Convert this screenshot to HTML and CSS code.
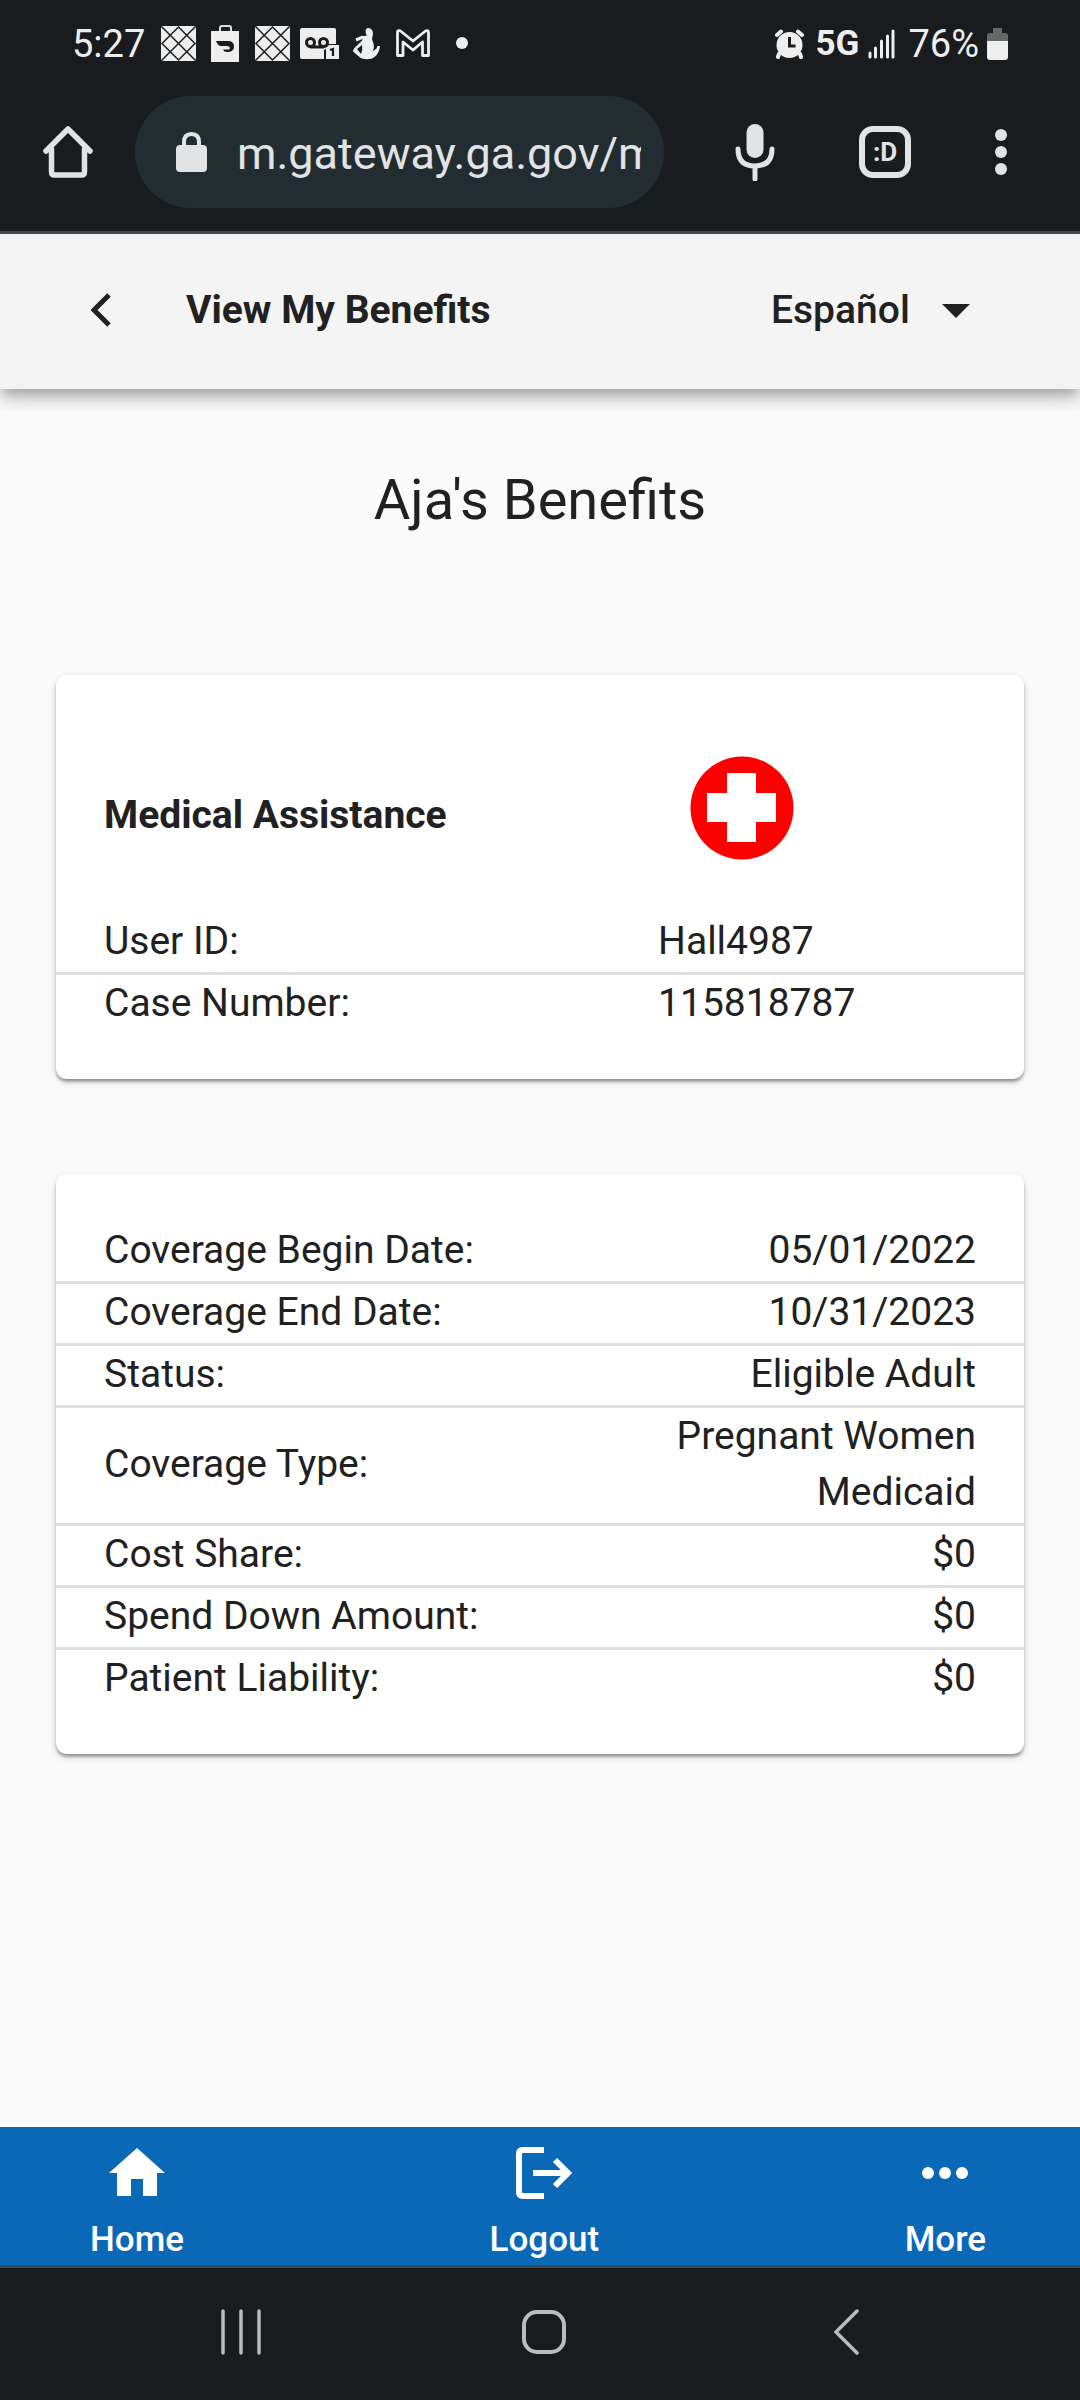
FILE: index.html
```html
<!DOCTYPE html>
<html lang="en">
<head>
<meta charset="utf-8">
<meta name="viewport" content="width=device-width, initial-scale=1">
<title>View My Benefits</title>
<link rel="stylesheet" href="styles.css">
</head>
<body>
<div class="status-bar">
  <div class="status-group">
    <span>5:27</span>
    <svg class="notifications" width="308" height="38" viewBox="161 26 308 38" aria-hidden="true">
      <defs>
        <g id="lattice">
          <rect width="35" height="35" rx="3" fill="#eee"/>
          <path d="M1 1l33 33M34 1L1 34M1 17.500L17.500 1L34 17.500L17.500 34zM1 1" fill="none" stroke="#191c1e" stroke-width="1.500"/>
        </g>
      </defs>
      <use href="#lattice" x="161" y="27"/>
      <path d="M220 33v-4q0-2 2-2h7q2 0 2 2v4" fill="none" stroke="#ddd" stroke-width="2"/>
      <path d="M211 32h28v31h-28z" fill="#eee"/>
      <path d="M216 42h12q6 0 6 5.500t-7 5.500q-3 0-4-2.500h5q2 0 2-1.500t-3-2h-6q-3 0-5-5z" fill="#191c1e"/>
      <use href="#lattice" x="255" y="27"/>
      <rect x="300" y="29" width="36" height="31" rx="2" fill="#eee"/>
      <path d="M310 48h14" stroke="#191c1e" stroke-width="3"/>
      <circle cx="310.500" cy="43.500" r="4" fill="none" stroke="#191c1e" stroke-width="3"/>
      <circle cx="323.500" cy="43.500" r="4" fill="none" stroke="#191c1e" stroke-width="3"/>
      <path d="M324 61v-9q0-2 2-2l2-5h12v16z" fill="#191c1e"/>
      <path d="M326 60V49l3-3h10v14z" fill="#eee"/>
      <path d="M330 51l3-1v7" fill="none" stroke="#191c1e" stroke-width="2.200"/>
      <path d="M368 29c4 0 6 4 4.500 8.500c-1 3 0 4 1 7c1 4 0 6-1 8l4-3l1-2.500h2.500c-.5 6-4 11-8 12.500c-4 1-9 1-12-1l-7-6c0-2 1-3 2-4l8-8l-3-1l1-2l6-1c-2-3-2-7 1-7.500zM362 46l-5 4l4 5q2-4 1-9z" fill="#eee"/>
      <path d="M356 41l7-3" stroke="#eee" stroke-width="3"/>
      <path d="M403 56.500h-5.500V33.500q0-2.500 3-1.500l12.500 10l12.500-10q3-1 3 1.500v23h-6V43l-9.500 8l-10-8z" fill="none" stroke="#eee" stroke-width="2.800" stroke-linejoin="round"/>
      <circle cx="462" cy="44" r="6" fill="#eee"/>
    </svg>
  </div>
  <div class="status-group status-right">
    <svg width="33" height="30" viewBox="0 0 33 30" aria-hidden="true">
      <circle cx="14.500" cy="16" r="13" fill="#eee"/>
      <path d="M4 25l-1 3M25 25l1 3M2 6l4-3.500M27 6l-4-3.500" stroke="#eee" stroke-width="4" stroke-linecap="round"/>
      <path d="M14.500 8v9h6" fill="none" stroke="#191c1e" stroke-width="3"/>
    </svg>
    <span class="network">5G</span>
    <svg width="33" height="30" viewBox="0 0 33 30" aria-hidden="true">
      <path d="M3 24v4M8.500 19v9M14.500 12v16M20.500 7v21M26 2v26" stroke="#eee" stroke-width="3" stroke-linecap="round"/>
    </svg>
    <span>76%</span>
    <svg width="21" height="32" viewBox="0 0 21 32" aria-hidden="true">
      <path d="M0 14V8q0-3 3-3h3V0h9v5h3q3 0 3 3v6z" fill="#66696a"/>
      <path d="M0 13h21v16q0 3-3 3H3q-3 0-3-3z" fill="#eee"/>
    </svg>
  </div>
</div>

<div class="toolbar">
  <button class="icon-button" aria-label="Home page">
    <svg width="50" height="54" viewBox="0 0 50 54"><path d="M3 26L25 4l22 22M8.500 24v23q0 3 3 3h27q3 0 3-3V24" fill="none" stroke="#e1e3e5" stroke-width="5.500" stroke-linecap="round" stroke-linejoin="round"/></svg>
  </button>
  <label class="address">
    <svg width="31" height="42" viewBox="0 0 31 42" aria-hidden="true"><rect y="14" width="31" height="27" rx="4" fill="#e1e3e5"/><path d="M8 16V11q0-8 7.500-8T23 11v5" fill="none" stroke="#e1e3e5" stroke-width="4"/></svg>
    <input type="text" aria-label="Address" value="m.gateway.ga.gov/m">
  </label>
  <div class="toolbar-actions">
    <button class="icon-button" aria-label="Voice search">
      <svg width="40" height="58" viewBox="0 0 40 58"><rect x="11.500" y="1" width="17" height="34" rx="8.500" fill="#e1e3e5"/><path d="M3 26q0 17 17 17t17-17M20 43v13" fill="none" stroke="#e1e3e5" stroke-width="5" stroke-linecap="round"/></svg>
    </button>
    <button class="icon-button tabs" aria-label="Tabs">:D</button>
    <button class="icon-button" aria-label="Menu">
      <svg width="12" height="46" viewBox="0 0 12 46"><g fill="#e1e3e5"><circle cx="6" cy="6" r="6"/><circle cx="6" cy="23" r="6"/><circle cx="6" cy="40" r="6"/></g></svg>
    </button>
  </div>
</div>

<header class="app-header">
  <button class="icon-button" aria-label="Back">
    <svg width="20" height="34" viewBox="0 0 20 34"><path d="M18 2L3 17l15 15" fill="none" stroke="#212121" stroke-width="5"/></svg>
  </button>
  <h1>View My Benefits</h1>
  <label class="language">
    <select aria-label="Language"><option>Español</option></select>
    <svg width="28" height="16" viewBox="0 0 28 16" aria-hidden="true"><path d="M0 2h28L14 16z" fill="#212121"/></svg>
  </label>
</header>

<main>
  <h2>Aja's Benefits</h2>

  <section class="card">
    <div class="program">
      <h3>Medical Assistance</h3>
      <svg width="104" height="104" viewBox="0 0 104 104" aria-hidden="true"><circle cx="52" cy="52" r="51.500" fill="#f00"/><path d="M37 17h29v20h20v29H66v20H37V66H17V37h20z" fill="#fff"/></svg>
    </div>
    <table>
      <tr><th scope="row">User ID:</th><td>Hall4987</td></tr>
      <tr><th scope="row">Case Number:</th><td>115818787</td></tr>
    </table>
  </section>

  <section class="card coverage">
    <table>
      <tr><th scope="row">Coverage Begin Date:</th><td>05/01/2022</td></tr>
      <tr><th scope="row">Coverage End Date:</th><td>10/31/2023</td></tr>
      <tr><th scope="row">Status:</th><td>Eligible Adult</td></tr>
      <tr><th scope="row">Coverage Type:</th><td>Pregnant Women Medicaid</td></tr>
      <tr><th scope="row">Cost Share:</th><td>$0</td></tr>
      <tr><th scope="row">Spend Down Amount:</th><td>$0</td></tr>
      <tr><th scope="row">Patient Liability:</th><td>$0</td></tr>
    </table>
  </section>
</main>

<nav class="app-nav">
  <a href="#home">
    <svg width="56" height="56" viewBox="0 0 56 56" aria-hidden="true"><path d="M28 3l28 25h-8v23H34V34H22v17H8V28H0z" fill="#fff"/></svg>
    Home
  </a>
  <a href="#logout">
    <svg width="58" height="56" viewBox="0 0 58 56" aria-hidden="true"><path d="M29 5H8Q4 5 4 9v38q0 4 4 4h21M18 28h36M40 15l13 13l-13 13" fill="none" stroke="#fff" stroke-width="6"/></svg>
    Logout
  </a>
  <a href="#more">
    <svg width="46" height="56" viewBox="0 0 46 56" aria-hidden="true"><g fill="#fff"><circle cx="6" cy="28" r="6"/><circle cx="23" cy="28" r="6"/><circle cx="40" cy="28" r="6"/></g></svg>
    More
  </a>
</nav>

<div class="system-nav">
  <button class="icon-button" aria-label="Recents">
    <svg width="40" height="46" viewBox="0 0 40 46"><path d="M2 2v42M20 2v42M38 2v42" stroke="#bbb" stroke-width="3.500" stroke-linecap="round"/></svg>
  </button>
  <button class="icon-button" aria-label="Home screen">
    <svg width="46" height="46" viewBox="0 0 46 46"><rect x="3" y="3" width="40" height="40" rx="13" fill="none" stroke="#bbb" stroke-width="4"/></svg>
  </button>
  <button class="icon-button" aria-label="System back">
    <svg width="32" height="46" viewBox="0 0 32 46"><path d="M30 2L9 23l21 21" fill="none" stroke="#bbb" stroke-width="3.500" stroke-linecap="round"/></svg>
  </button>
</div>
</body>
</html>
```
FILE: styles.css
```css
* {
  box-sizing: border-box;
}

body {
  display: flex;
  flex-direction: column;
  min-height: 100vh;
  margin: 0;
  background: #fafafa;
  color: #212121;
  font-family: Roboto, sans-serif;
  font-size: 39px;
  line-height: 56px;
}

svg {
  display: block;
  flex: none;
}

h1,
h2,
h3 {
  margin: 0;
}

.icon-button {
  display: flex;
  align-items: center;
  justify-content: center;
  padding: 0;
  border: 0;
  background: none;
}

/* Device status bar */
.status-bar {
  display: flex;
  align-items: center;
  justify-content: space-between;
  height: 88px;
  padding: 0 72px;
  background: #191c1e;
  color: #eee;
  font-size: 38px;
}

.status-group {
  display: flex;
  align-items: center;
  gap: 16px;
}

.status-right {
  gap: 8px;
}

.network {
  font-size: 35px;
  font-weight: 700;
}

/* Browser toolbar */
.toolbar {
  display: flex;
  align-items: center;
  gap: 42px;
  padding: 8px 73px 23px 43px;
  border-bottom: 3px solid #44484b;
  background: #191c1e;
}

.address {
  display: flex;
  flex: 1;
  align-items: center;
  gap: 30px;
  min-width: 0;
  height: 112px;
  padding: 0 23px 0 41px;
  border-radius: 56px;
  background: #222d32;
}

.address input {
  flex: 1;
  width: 0;
  min-width: 0;
  padding: 3px 0 0;
  border: 0;
  background: none;
  color: #e1e3e5;
  font: 400 45px/56px Roboto, sans-serif;
}

.toolbar-actions {
  display: flex;
  flex: none;
  align-items: center;
  justify-content: space-between;
  width: 272px;
  margin-left: 29px;
}

.tabs {
  width: 52px;
  height: 52px;
  border: 6px solid #e1e3e5;
  border-radius: 14px;
  color: #e1e3e5;
  font: 700 26px/32px Roboto, sans-serif;
}

/* Application header */
.app-header {
  display: flex;
  align-items: center;
  height: 155px;
  padding: 0 110px 4px 91px;
  background: #f4f4f4;
  box-shadow: 0 6px 11px -3px rgba(0, 0, 0, 0.2), 0 11px 14px rgba(0, 0, 0, 0.14), 0 3px 28px rgba(0, 0, 0, 0.12);
  clip-path: inset(0 0 -22px);
}

.app-header h1 {
  margin-left: 75px;
  font-size: 39px;
  font-weight: 700;
}

.language {
  display: flex;
  align-items: center;
  gap: 32px;
  margin-left: auto;
}

.language select {
  padding: 0;
  border: 0;
  appearance: none;
  background: none;
  color: inherit;
  font: 500 39px/56px Roboto, sans-serif;
}

/* Benefit details */
main {
  flex: 1;
  padding: 72px 56px;
}

main h2 {
  margin-bottom: 136px;
  font-size: 56px;
  font-weight: 400;
  line-height: 78px;
  text-align: center;
}

.card {
  padding: 48px 0 45px;
  border-radius: 11px;
  background: #fff;
  box-shadow: 0 6px 3px -6px rgba(0, 0, 0, 0.2), 0 3px 3px rgba(0, 0, 0, 0.3), 0 3px 8px rgba(0, 0, 0, 0.12);
}

.card + .card {
  margin-top: 95px;
}

.program {
  display: grid;
  grid-template-columns: 62.2% auto;
  align-items: center;
  padding: 33px 0 53px;
}

.program h3 {
  padding: 14px 0 0 48px;
  font-size: 39px;
  font-weight: 700;
}

.program svg {
  margin-left: 32px;
}

table {
  width: 100%;
  border-collapse: separate;
  border-spacing: 0;
  table-layout: fixed;
}

th,
td {
  padding: 0 0 3px;
  border-bottom: 3px solid #e0e0e0;
  font-weight: 400;
  text-align: left;
}

th {
  width: 62.2%;
  padding-left: 48px;
}

td {
  padding-right: 48px;
}

tr:last-child > * {
  border-bottom: 0;
}

.coverage th {
  width: 60%;
}

.coverage td {
  text-align: right;
}

/* Application navigation */
.app-nav {
  display: flex;
  justify-content: space-between;
  height: 141px;
  padding: 18px 94px 0 90px;
  border-bottom: 3px solid #3a4c59;
  background: #0a69b7;
}

.app-nav a {
  display: flex;
  flex-direction: column;
  align-items: center;
  gap: 19px;
  color: #fff;
  font-size: 35px;
  font-weight: 500;
  line-height: 40px;
  text-decoration: none;
}

/* Device navigation */
.system-nav {
  display: flex;
  align-items: center;
  justify-content: space-between;
  height: 132px;
  padding: 0 221px 4px;
  background: #191c1e;
}
```
